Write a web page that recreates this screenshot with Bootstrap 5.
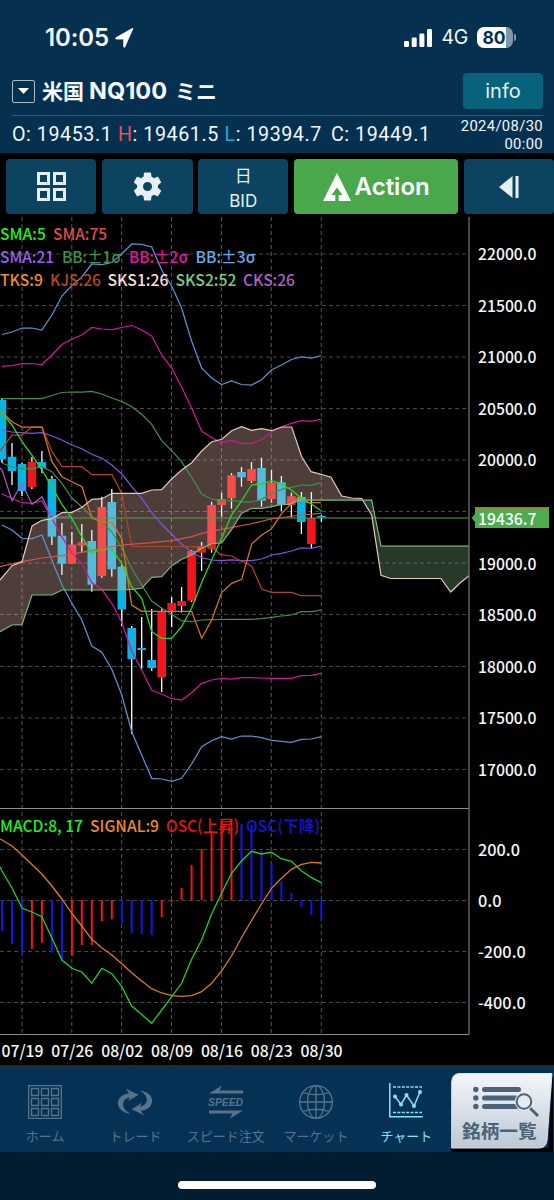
<!DOCTYPE html>
<html lang="ja">
<head>
<meta charset="utf-8">
<meta name="viewport" content="width=device-width, initial-scale=1">
<title>米国NQ100ミニ</title>
<link href="https://cdn.jsdelivr.net/npm/bootstrap@5.3.0/dist/css/bootstrap.min.css" rel="stylesheet">
<style>
body{background:#000;color:#f2f8fc;font-family:Inter,"Noto Sans CJK JP",sans-serif;width:554px;height:1200px;overflow:hidden;line-height:1}
svg{display:block;flex:none}
.top-area{background:#053050;height:153px}
.status-bar{height:73px;padding:2px 38px 0 45px}
.clock{font-size:24px;font-weight:600;letter-spacing:-.1px;margin-right:6px}
.net{font-size:19.5px;font-weight:400;margin:0 9px 0 9px;letter-spacing:-.3px}
.batt{width:36px;height:21px;border-radius:7px;background:linear-gradient(90deg,#fff 80%,#8196a8 80%);color:#053050;font-size:17.5px;font-weight:700;padding-right:2px}
.batt-tip{width:2px;height:7px;border-radius:0 2px 2px 0;background:#8196a8;margin-left:1px}
.title-row{height:43px;margin:0 11px 0 12px;padding-bottom:6px;border-bottom:1px solid #2b587b}
.drop-box{width:23px;height:23px;border:1px solid #a9bccb;border-radius:2px}
.sym{font-size:21px;font-weight:700;margin-left:7px;white-space:nowrap}
.sym-code{font-size:23.5px;margin:0 8px 0 5px}
.info-btn{width:80px;height:36px;background:#06637b;border-radius:4px;font-size:20px;color:#e4f2f6}
.ohlc{margin:0 11px 0 12px;height:37px;padding-top:1px;font-family:Roboto,sans-serif;font-size:19.7px;letter-spacing:.55px;font-weight:400;white-space:nowrap}
.stamp{font-size:14.8px;line-height:18px;text-align:right;letter-spacing:.35px}
.c-h{color:#e0535d}.c-l{color:#1fa9dc}
.tool-bar{height:64px;padding:6px 0 3px 6px;gap:6px}
.tool{background:#0b4360;border-radius:4px;width:90.3px;height:55px;flex:none;font-size:17px;color:#e6f0f5}
.tool.action-btn{width:163.5px;background:#49a74c;font-weight:600;font-size:24px;color:#fff}
.chart text{font-family:"Noto Sans CJK JP",sans-serif;font-size:16.3px;font-weight:500}
.tabs-area{height:87px;background:#053154;border-top:2px solid #232b31;color:#56738a}
.tab-item{width:90.3px;padding-top:18px;font-size:13px;flex:none;font-family:"Noto Sans CJK JP",sans-serif;white-space:nowrap}
.tab-item svg{margin-bottom:10px}
.tab-item.on{color:#86e2f8}
.list-tab{width:102px;flex:none;background:#000}
.foot{height:48px;background:#031d30;padding-top:29px}
.foot-pill{width:198px;height:8px;border-radius:4px;background:#fff}
</style>
</head>
<body>
<header class="top-area">
  <div class="status-bar d-flex align-items-center">
    <span class="clock">10:05</span>
    <svg width="19" height="20" viewBox="0 0 19 20"><path d="M17.700 1 9.800 19Q9 20 8.700 18.600V11H1.100Q-.4 10.500 1.100 9.600L16.800.8Q18.500 0 17.700 1Z" fill="#fff" stroke="#fff" stroke-width=".8"/></svg>
    <svg class="ms-auto" width="28" height="18" viewBox="0 0 28 18" fill="#fff"><rect y="12" width="5" height="6" rx="1.300"/><rect x="7.700" y="8.500" width="5" height="9.500" rx="1.300"/><rect x="15.400" y="4.500" width="5" height="13.500" rx="1.300"/><rect x="23" width="5" height="18" rx="1.300"/></svg>
    <span class="net">4G</span>
    <span class="batt d-flex align-items-center justify-content-center">80</span><i class="batt-tip"></i>
  </div>
  <div class="title-row d-flex align-items-center">
    <span class="drop-box d-flex align-items-center justify-content-center"><svg width="11" height="6" viewBox="0 0 11 6"><path d="M0 0h11L5.500 6Z" fill="#fff"/></svg></span>
    <span class="sym d-flex align-items-center"><span>米国</span><span class="sym-code">NQ100</span><span>ミニ</span></span>
    <span class="info-btn ms-auto d-flex align-items-center justify-content-center">info</span>
  </div>
  <div class="ohlc d-flex align-items-center">
    <span style="width:106px">O: 19453.1</span><span style="width:106.500px"><span class="c-h">H</span>: 19461.5</span><span style="width:106.500px"><span class="c-l">L</span>: 19394.7</span><span>C: 19449.1</span>
    <span class="stamp ms-auto">2024/08/30<br>00:00</span>
  </div>
</header>
<div class="tool-bar d-flex">
  <div class="tool d-flex align-items-center justify-content-center"><svg width="29" height="29" viewBox="0 0 29 29" fill="none" stroke="#e6f0f5" stroke-width="3"><path d="M1.500 1.500h10v10h-10zM17.500 1.500h10v10h-10zM1.500 17.500h10v10h-10zM17.500 17.500h10v10h-10z"/></svg></div>
  <div class="tool d-flex align-items-center justify-content-center"><svg width="35" height="35" viewBox="0 0 24 24" fill="#e6f0f5"><path d="M19.140 12.940c.040-.300.060-.610.060-.940s-.020-.640-.070-.940l2.030-1.580a.490.490 0 0 0 .120-.610l-1.920-3.320a.490.490 0 0 0-.590-.220l-2.390.960a7 7 0 0 0-1.620-.940l-.360-2.540A.480.480 0 0 0 13.920 2.400h-3.840a.480.480 0 0 0-.470.410l-.360 2.540a7 7 0 0 0-1.620.940l-2.390-.960a.490.490 0 0 0-.590.220L2.740 8.870a.490.490 0 0 0 .120.610l2.030 1.580a6 6 0 0 0 0 1.880l-2.030 1.580a.490.490 0 0 0-.120.610l1.920 3.320c.120.220.370.290.590.220l2.390-.960c.500.380 1.030.700 1.620.940l.360 2.540c.050.240.240.410.480.410h3.840c.240 0 .440-.170.470-.410l.360-2.540a7 7 0 0 0 1.620-.940l2.390.960c.220.080.470 0 .590-.220l1.920-3.320a.490.490 0 0 0-.120-.610ZM12 15.100a3.100 3.100 0 1 1 0-6.200 3.100 3.100 0 0 1 0 6.200Z"/></svg></div>
  <div class="tool d-flex flex-column align-items-center justify-content-center gap-2" style="margin-left:-.5px"><span class="pt-1">日</span><span>BID</span></div>
  <div class="tool action-btn d-flex align-items-center justify-content-center gap-1"><svg width="28" height="28" viewBox="0 0 28 28" fill="#fff"><path d="M14 0 28 28H15.700V22h3.800L14 14.500 8.500 22h3.800v6H0Z"/></svg><span>Action</span></div>
  <div class="tool d-flex align-items-center justify-content-center"><svg width="20" height="24" viewBox="0 0 20 24" fill="#e6f0f5"><path d="M0 12 13.500 1V23ZM16.500 1H19.500V23H16.500Z"/></svg></div>
</div>
<svg class="chart" id="chart" width="554" height="848" viewBox="0 217 554 848"></svg>
<nav class="tabs-area d-flex">
  <div class="tab-item d-flex flex-column align-items-center"><svg width="34" height="34" viewBox="0 0 34 34" fill="none" stroke="currentColor" stroke-width="1.300"><path d="M.700.700h32.600v32.600H.700zM3.500 3.500h7v7h-7zM13.500 3.500h7v7h-7zM23.500 3.500h7v7h-7zM3.500 13.500h7v7h-7zM13.500 13.500h7v7h-7zM23.500 13.500h7v7h-7zM3.500 23.500h7v7h-7zM13.500 23.500h7v7h-7zM23.500 23.500h7v7h-7z"/></svg>ホーム</div>
  <div class="tab-item d-flex flex-column align-items-center"><svg width="34" height="34" viewBox="0 -3 34 34" fill="currentColor"><g id="swoosh"><path d="M12.500 25.500C-4 24-4 7 11 5.200L8 .8 20.500 6.800 10 13.200 12 9.200C3 11 2.500 20.500 12.500 25.500Z"/></g><use href="#swoosh" transform="rotate(180 17 14)"/></svg>トレード</div>
  <div class="tab-item d-flex flex-column align-items-center"><svg width="36" height="34" viewBox="0 0 36 34" fill="currentColor"><path d="M1 8.500 14 .5 11.500 5.500H35v3ZM35 25.500 22 33.500l2.500-5H1v-3Z"/><text x="0" y="20.800" font-family="Liberation Sans" font-weight="700" font-style="italic" font-size="10.500" textLength="35" lengthAdjust="spacingAndGlyphs">SPEED</text></svg>スピード注文</div>
  <div class="tab-item d-flex flex-column align-items-center"><svg width="36" height="34" viewBox="0 0 36 34" fill="none" stroke="currentColor" stroke-width="1.300"><circle cx="18" cy="17" r="16.300"/><ellipse cx="18" cy="17" rx="8.500" ry="16.300"/><path d="M18 .7v32.600M1.700 17h32.600M5 7.500Q18 12 31 7.500M5 26.500Q18 22 31 26.500"/></svg>マーケット</div>
  <div class="tab-item on d-flex flex-column align-items-center"><svg style="margin-top:-3px" width="34" height="37" viewBox="0 0 34 37" fill="none" stroke="currentColor" stroke-width="1.500"><path d="M.800 1v33.800h33"/><path d="M4 5h29M4 30.500h29" stroke-dasharray="3 1.400"/><path d="M6 14.500 12 22.500 17.500 13 25 24 31 10"/><g fill="currentColor" stroke="none"><circle cx="6" cy="14.500" r="2"/><circle cx="12" cy="22.500" r="2"/><circle cx="17.500" cy="13" r="2"/><circle cx="25" cy="24" r="2"/><circle cx="31" cy="10" r="2"/></g></svg>チャート</div>
  <div class="list-tab"><svg width="102" height="85" viewBox="0 0 102 85"><defs><linearGradient id="lg" x2="0" y2="1"><stop stop-color="#f4f7fa"/><stop offset="1" stop-color="#bcc8d6"/></linearGradient></defs><path d="M0 0h102V5L98 82H0Z" fill="#053154"/><path d="M97 85 102 4V85ZM0 81H102v4H0Z" fill="#000"/><path d="M9 6.500H101L96 73q-1 8-8 8H.7V15Q1 6.500 9 6.500Z" fill="url(#lg)" stroke="#dce4ec"/><g fill="#4b6378"><circle cx="24.800" cy="22.500" r="2.700"/><circle cx="24.800" cy="31" r="2.700"/><circle cx="24.800" cy="39.500" r="2.700"/><rect x="31" y="20" width="39" height="5" rx="2.500"/><rect x="31" y="28.500" width="36" height="5" rx="2.500"/><rect x="31" y="37" width="37" height="5" rx="2.500"/></g><path d="m78 40 9 9" stroke="#4b6378" stroke-width="3"/><circle cx="73" cy="34.500" r="9.300" fill="#e6ebf0"/><circle cx="73" cy="34.500" r="7.300" fill="#e6ebf0" stroke="#4b6378" stroke-width="2"/><text x="11" y="71" font-family="Noto Sans CJK JP" font-size="18.700" font-weight="700" fill="#4b6378">銘柄一覧</text></svg></div>
</nav>
<footer class="foot d-flex justify-content-center"><div class="foot-pill"></div></footer>
<script src="https://cdn.jsdelivr.net/npm/bootstrap@5.3.0/dist/js/bootstrap.bundle.min.js"></script>
<script>
const X = k => +(2 + k * 9.98).toFixed(1);
let out = '';
const add = s => out += s;
const seg = (x1, y1, x2, y2, c, w, extra = '') => add(`<line x1="${x1}" y1="${y1}" x2="${x2}" y2="${y2}" stroke="${c}" stroke-width="${w}" ${extra}/>`);
const poly = (pts, c, w = 1.25) => add(`<polyline points="${pts}" fill="none" stroke="${c}" stroke-width="${w}"/>`);
// one value for every day, starting at the first candle
const daily = ys => ys.map((y, k) => X(k) + ',' + y).join(' ');
const label = (x, y, t, c, len) => add(`<text x="${x}" y="${y}" fill="${c}" ${len ? `textLength="${len}" lengthAdjust="spacingAndGlyphs"` : ''}>${t}</text>`);

add('<rect y="217" width="554" height="848" fill="#000"/>');
const dash = 'stroke-dasharray="4 3"';
[254,305.5,357,408.5,460,511.5,563,614.500,666.500,718,769.500,849.500,900.500,951.500,1002.500].forEach(y => seg(0, y, 469, y, '#474747', 1, dash));
[22,71.800,121.600,171.500,221.500,271.300,321.300].forEach(x => seg(x, 217, x, 1034, '#555', 1, dash));

// candles: body top, body bottom, wick top, wick bottom, direction (1 = up)
const candles = [[400,459.300,398,463,0],[456.700,471,443,485,0],[464,491,462.700,496,0],[461.700,487,456.700,489,1],[462,468,451,473,0],[479,536.700,475.700,545,0],[535.700,563.700,523,575,0],[544.700,563.700,532,564,1],[542.500,545.500,524,551.700,1],[541,584.700,530,591.700,0],[507,576,496.700,577.700,1],[502,569.300,489,576.700,0],[566.700,609.300,565,626,0],[628,659,626,734,0],[648,650,617,669,0],[660,668,609,671,0],[611,677.500,607.700,692,1],[603,610.700,597,627,1],[601,606,587,612.700,1],[551,600.700,550,602,1],[546.700,552.700,542,571,1],[505,549,501.700,552.700,1],[499,505,492.700,516.700,1],[475.300,498.300,473,508.700,1],[472,477.300,467,486.700,0],[469,481,462,483,1],[468,500.700,457.700,506.700,0],[482.700,499,470,502.700,1],[482.300,504.700,476,511,0],[496.300,505,492.700,517.700,1],[497,522,492,534,0],[518,544,492,548,1],[516,517.600,515,522,0]];
candles.forEach(([t, b, h, l, up], k) => {
  seg(X(k), h, X(k), l, '#fff', 1.3);
  add(`<rect x="${X(k) - 4.300}" y="${t}" width="8.600" height="${b - t}" fill="${up ? '#f4151c' : '#08b3e6'}"/>`);
});

// Ichimoku cloud
const a1 = '0,580 12,565.7 22,561.7 32,526 42,520.3 52,518.7 62,512.7 72,512.3 82,507.3 92,499.3 102,498.7 112,493.3 141.7,493.3 151.7,490 161.7,489.7 171.7,479 181.7,470 191.7,462.7 201.7,451 211.7,441.7 221.7,439.3 231.7,430.7 241.7,426.7 251.7,430.3 261.7,428.7 271.5,430.7 281.7,427 291.7,427 301.7,456.7 311,471.7 321,474.3 331,477.3 341.7,496 351.7,498 361.7,498.5';
const b1 = '0,631.7 12,625 22,624.7 32,595 52,595 62,590 122,590 131.7,589.3 141.7,588.3 151.7,577.3 161.7,576.7 171.7,565.7 181.7,559.3 191.7,555 201.7,548.3 211.7,543.7 221.7,543 231.7,529.3 241.7,513.3 251.7,508.3 261.7,508.3 271.5,506.7 281.7,504.3 289,504.3 300,500.2';
const a2 = '371.7,515 381,575.3 390.500,578.5 441,578.5 450.700,592 460,583 469,575.7';
const b2 = '371.7,500.2 381,546.2 469,546.2';
const rev = s => s.split(' ').reverse().join(' ');
add(`<polygon points="${a1} 363,500.2 ${rev(b1)}" fill="rgba(255,205,190,.3)"/>`);
add(`<polygon points="363,500.2 ${a2} ${rev(b2)}" fill="rgba(130,190,135,.3)"/>`);

seg(0, 518, 469, 518, '#4aa64c', 1.2);
poly(daily([334.500,332,328,328,330,315,296,285.500,277,264,264.500,262.500,254,244,244.300,247,270,286,308,341,368,378,384.500,381,384.500,385,379.700,370,365,359.500,357,358,355.500]), '#5596cf');
poly(daily([366.300,365.700,363.500,363.500,364.500,355,344.500,339,335,327.500,329,329.500,327.500,325.300,330,336,355,368,387,408,431,437.500,442.700,440.500,443.300,443.500,439.700,432,427,423.300,420.700,421.300,419]), '#d4149b');
poly(daily([398.500,398.500,398.500,398.500,398.500,395.500,392.500,392,392,391.300,394,398,401.500,406.700,414.300,424.300,440.700,450.700,461.700,477.300,494,499,501,500.700,501.700,502,499.300,493.300,489.300,487.300,485,485,482.700]), '#3f9049');
poly(daily([430,432,432.700,433.300,432.700,436,440,445,448.700,454.300,458.300,465,474,486.700,498.300,512.700,524.300,534.300,544.300,551.700,557.700,560,560.700,560,560.700,560.700,559,555,553.300,551,548,548.300,546]), '#8350e0');
poly(daily([463,467,468.700,468.700,466.700,471.700,483.300,498,506.700,517,522,532,548,568.300,585,601,608.300,614.300,620.700,621.700,620,619.700,619.500,619.300,619.300,619.300,618.700,617.300,616,615,611.700,611.700,610]), '#3f9049');
poly(daily([494,498.300,502.700,503.300,501,518.300,536.700,553,563.300,582.700,589.300,603.300,622.500,651,670,690,694,698.700,700,692.700,683.300,680,678.300,679,677.700,677.700,678,678.300,678.300,678.300,675.700,675.300,673.300]), '#d4149b');
poly(daily([525,530,538.300,538.700,535,560,585,603.300,620,646,652.300,669.300,695,731.700,755,778.300,779,781.300,778.300,764,746.700,740.700,736.700,739,736,736,737.700,740.300,741.300,742.300,739.300,739,736.700]), '#5596cf');
poly('0,468 2,470 12,500.7 22,483.3 32,504.3 42,496.7 52,518 62,517 71,516.5', '#a558c8');
poly('0,451 12,435 22,435 32,427 42,427 52,451.7 62,466.7 82,466.7 92,474.7 112,474.7 121.7,493.3 131.7,546.3 211.7,546.7 220,554.3 231.7,556 241,561 251.7,566 261.7,589 271.3,592.3 291.7,592.3 300.7,595.7 321,595.7', '#b04420');
poly('0,410 12,421.7 22,427 42,427 52,461.7 62,476.7 72,481.7 82,486.7 92,518.3 102,522 112,522.7 121.7,538.3 131.7,605 141.7,611.3 191.7,611.3 201.7,638.3 211.7,620 221.7,592.3 231.7,583.3 241.7,579.3 251.7,544 261.7,535 271.3,529 281.7,513.3 291.7,503.3 298,498.3 307,502.7 321,502.7', '#d8781c');
poly('0,566.7 22,561.7 42,558 62,555.7 82,552.3 102,548.3 122,545 151.7,542.7 171.7,540.7 191.7,536.7 201.7,533.3 221.7,529.3 250,524 271,519 301.7,515 321,513.3', '#dd5248');
poly(a1 + ' ' + a2, '#e8c8bc', 1.2);
poly(b1 + ' ' + b2, '#78b97c', 1.2);
poly(daily([413,425,441.700,455,470,486.700,504.300,518.300,536.700,552.700,549.300,549.300,563.300,586.700,598.300,631.700,638.300,638.300,626.700,608.300,582.700,560,538.300,515,501,485,484,480.700,484,490,498.300,504,511]), '#22dc1c', 1.3);

// MACD panel
const osc = [931,944,953.700,-948.700,-942.700,952.700,960.700,-955.700,-945,-945,-921,-919,923,933,934,935,-917,-902,-888,-865,-849,-831,-822,-819,824,825,851,864,881,892.700,907,915,919];
osc.forEach((v, k) => seg(X(k), 900, X(k), Math.abs(v), v < 0 ? '#f41414' : '#1414f0', 2));
poly('0,866.7 ' + daily([871,888,908,912,916.700,938,960,968.300,972,983.300,968.300,973.700,986.700,1006,1014.500,1023.300,1010,996.700,983.300,959.300,940,914,893.300,873.300,861,851.300,854,852.300,858.700,861.300,870.700,877.700,882.700]), '#1cd41c', 1.3);
poly('0,839 ' + daily([840,846,855,864.500,874,886,899,913.300,926,939.300,947.700,955,963.700,972.700,981,988.700,993,995.700,996.300,995.700,991.700,983.300,971,956,937.700,920.700,904,888.300,878.300,869.300,864.300,862.300,863]), '#dc7c18', 1.3);

seg(0, 808.500, 469, 808.500, '#8c8c8c', 1);
seg(0, 1034.500, 469, 1034.500, '#8c8c8c', 1);
seg(469, 217, 469, 1034.500, '#777', 1.2);

label(0, 240, 'SMA:5', '#1ef01e', 46); label(53, 240, 'SMA:75', '#e0484a', 54);
label(0, 263, 'SMA:21', '#9560f5', 54); label(62, 263, 'BB:±1σ', '#3f9049', 59); label(129, 263, 'BB:±2σ', '#e0179f', 59); label(195.500, 263, 'BB:±3σ', '#64aaf0', 60);
label(0, 285.500, 'TKS:9', '#f08a22', 43); label(50, 285.500, 'KJS:26', '#b8451f', 51); label(107.500, 285.500, 'SKS1:26', '#ffdcd0', 61); label(175.500, 285.500, 'SKS2:52', '#7dcc80', 61); label(243, 285.500, 'CKS:26', '#ae5fca', 52);
label(0, 832, 'MACD:8, 17', '#1ef01e', 83); label(90, 832, 'SIGNAL:9', '#f08a22', 69); label(166, 832, 'OSC(上昇)', '#e81212', 73); label(246, 832, 'OSC(下降)', '#1414d4', 74);

['22000.0','21500.0','21000.0','20500.0','20000.0',,'19000.0','18500.0','18000.0','17500.0','17000.0'].forEach((t, i) => label(478, 260 + i * 51.600, t, '#f5f5f5', 58.500));
[['200.0',855.500],['0.0',906.500],['-200.0',957.500],['-400.0',1008.500]].forEach(([t, y]) => label(478, y, t, '#f5f5f5'));
['07/19','07/26','08/02','08/09','08/16','08/23','08/30'].forEach((t, i) => label(1.500 + i * 49.850, 1056.500, t, '#f5f5f5', 42));
add('<path d="M475 507H549V510H475ZM471 518 475 512Z" fill="#d8641c"/><path d="M475 508.500H549V528H475V522L471.500 518 475 514Z" fill="#4cac50"/>');
label(478, 525, '19436.7', '#fff', 58.500);
document.getElementById('chart').innerHTML = out;
</script>
</body>
</html>
